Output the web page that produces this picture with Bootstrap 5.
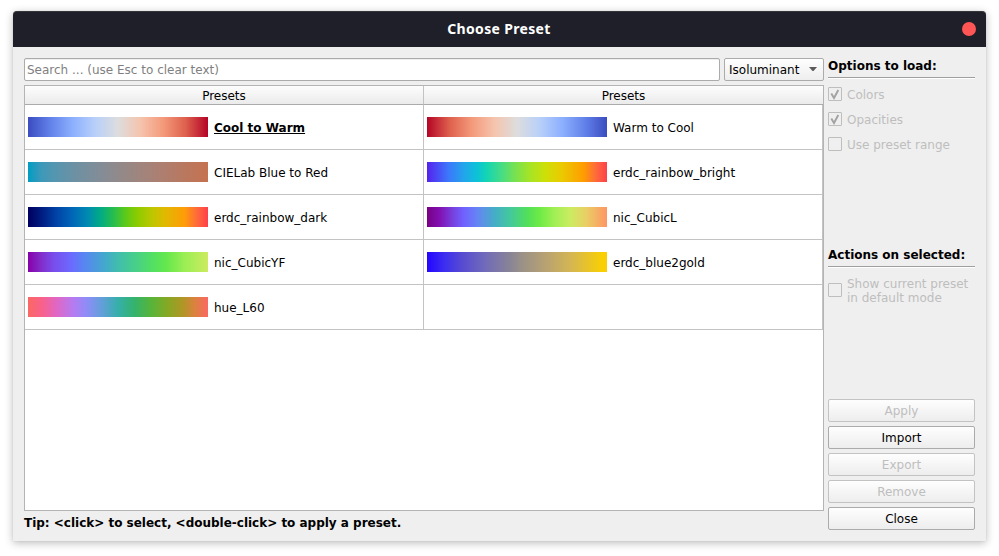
<!DOCTYPE html>
<html lang="en">
<head>
<meta charset="utf-8">
<title>Choose Preset</title>
<link href="https://cdn.jsdelivr.net/npm/bootstrap@5.3.0/dist/css/bootstrap.min.css" rel="stylesheet">
<style>
body{font:12px/14px "DejaVu Sans",sans-serif;color:#000;background:#fff;width:999px;height:556px;overflow:hidden;padding:11px 13px 15px}
.dialog-window{width:973px;height:530px;background:#efefef;border-radius:4px 4px 0 0;box-shadow:0 2px 8px rgba(0,0,0,.27),0 0 1px rgba(0,0,0,.2)}
.title-bar{height:36px;background:#1f1f29;border-top:1px solid #34343b;border-radius:4px 4px 0 0;padding:0 10px}
.title-text{font:700 14px/33px "Noto Sans",sans-serif;letter-spacing:.33px;color:#fff;padding:0 0 2px 13px}
.close-dot{width:14px;height:14px;border-radius:50%;background:#ff5555;margin-bottom:1px}
.main-body{padding:11px;gap:4px}
.left-pane{width:800px}
.right-pane{width:147px}
.search-box.form-control{width:696px;height:23px;min-height:0;font-size:12px;line-height:14px;padding:0 2px;border:1px solid #ababab;border-radius:2px;box-shadow:inset 0 1px #eee}
.search-box::placeholder{color:#7f7f7f}
.kind-box{width:100px;height:23px;border:1px solid #ababab;border-radius:2px;padding:0 6px 0 4px;background:linear-gradient(#fefefe,#eee)}
.preset-table{height:426px;margin-top:4px;border:1px solid #b4b4b4;background:#fff}
.grid-row{display:grid;grid-template-columns:399px 399px}
.head-cell{height:19px;line-height:18px;padding-top:1px;text-align:center;background:linear-gradient(#fdfdfd,#ebebeb);border-bottom:1px solid #ababab;border-right:1px solid #c3c3c3}
.head-cell:last-child{border-right:0}
.preset-cell{height:45px;border-right:1px solid #c3c3c3;border-bottom:1px solid #c3c3c3;padding-left:3px;gap:6px}
.preset-name{padding-top:2px}
.swatch{width:180px;height:20px}
.tip{height:14px;margin-top:5px;letter-spacing:-.01px}
.side-head{font-weight:700;padding:1px 0 4px;border-bottom:1px solid #9f9f9f;box-shadow:0 1px #fff}
.options{padding-top:9px;gap:11px}
.actions{margin-top:96px}
.tick-row{color:#bebebe;gap:5px}
.options .tick-row{height:14px}
.options .tick-row span{padding-top:1px}
.tick-row svg{flex:none}
.default-mode{padding-top:10px}
.default-mode svg{margin-bottom:2px}
.dlg-btn.btn{height:23px;font-size:12px;line-height:20px;padding:1px 0 0;color:#000;border:1px solid #ababab;border-radius:2px;background:linear-gradient(#fefefe,#ededed)}
.dlg-btn.btn:disabled{color:#bebebe;border-color:#c3c3c3;opacity:1}
.g1{background:linear-gradient(90deg,#3b4cc0,#6282ea 12.5%,#8db0fe 25%,#b8d0f9 37.5%,#dddddd 50%,#f5c4ad 62.5%,#f49a7b 75%,#de604d 87.5%,#b40426)}
.g2{background:linear-gradient(270deg,#3b4cc0,#6282ea 12.5%,#8db0fe 25%,#b8d0f9 37.5%,#dddddd 50%,#f5c4ad 62.5%,#f49a7b 75%,#de604d 87.5%,#b40426)}
.g3{background:linear-gradient(90deg,#009dc4,#3b99b9 7%,#5296b1 14%,#6b91a4 25%,#868c95 42%,#978885 55%,#ab8073 72%,#b9785f 87%,#c57251)}
.g4{background:linear-gradient(90deg,#5422ed,#3c78fb 12%,#20a7ea 21%,#0cc3d6 28%,#13d4b4 33%,#44dc88 41%,#78e150 49%,#a5e426 57%,#cfdf08 66%,#ebc900 75%,#ff9d00 87%,#ff693c 94%,#ff4049)}
.g5{background:linear-gradient(90deg,#00005f,#001e83 8%,#0044a7 16%,#0068b7 25%,#008ab2 33%,#00aa85 40%,#24bc52 47%,#5bc91b 54%,#8ecb00 61%,#bec600 69%,#e0b900 76%,#ff9c08 87%,#ff693c 94%,#ff4049)}
.g6{background:linear-gradient(90deg,#780085,#8210b2 7%,#773fdc 14%,#715fff 20%,#6585f4 28%,#43afc5 38%,#43c89d 46%,#52e059 56%,#70eb46 63%,#a2ef54 71%,#cceb61 80%,#e9d065 88%,#ff9564)}
.g7{background:linear-gradient(90deg,#8700a9,#832bc9 7%,#794ceb 14%,#6b6aff 24%,#5688f0 32%,#42aacb 43%,#41bdad 50%,#47ce8c 59%,#52df63 69%,#65e84c 77%,#9bee54 87%,#cceb61)}
.g8{background:linear-gradient(90deg,#fb6863,#f8618c 8%,#df67c5 16%,#b67bf1 25%,#918bf8 32%,#629fda 41%,#36afaa 50%,#34b36d 59%,#55b43b 68%,#83a924 77%,#b09625 86%,#dd8040 93%,#fb6863)}
.g9{background:linear-gradient(90deg,#2305ff,#3d2fef 10%,#584cd0 20%,#716abb 32%,#888495 46%,#9b9287 53%,#b8a271 66%,#d5b653 80%,#fad000 98%,#fccc04)}
</style>
<script src="https://cdn.jsdelivr.net/npm/bootstrap@5.3.0/dist/js/bootstrap.bundle.min.js"></script>
</head>
<body>
<div class="dialog-window d-flex flex-column">
  <header class="title-bar d-flex align-items-center">
    <div class="title-text flex-grow-1 text-center">Choose Preset</div>
    <div class="close-dot"></div>
  </header>
  <main class="main-body d-flex flex-grow-1">
    <section class="left-pane d-flex flex-column">
      <div class="d-flex gap-1">
        <input class="search-box form-control" placeholder="Search ... (use Esc to clear text)">
        <div class="kind-box d-flex align-items-center justify-content-between">Isoluminant
          <svg width="8" height="5"><path d="M0 0h8L4.5 4h-1z" fill="#5b5b5b"/></svg></div>
      </div>
      <div class="preset-table">
        <div class="grid-row"><div class="head-cell">Presets</div><div class="head-cell">Presets</div></div>
        <div class="grid-row">
          <div class="preset-cell d-flex align-items-center"><div class="swatch g1"></div><span class="preset-name fw-bold text-decoration-underline">Cool to Warm</span></div>
          <div class="preset-cell d-flex align-items-center"><div class="swatch g2"></div><span class="preset-name">Warm to Cool</span></div>
          <div class="preset-cell d-flex align-items-center"><div class="swatch g3"></div><span class="preset-name">CIELab Blue to Red</span></div>
          <div class="preset-cell d-flex align-items-center"><div class="swatch g4"></div><span class="preset-name">erdc_rainbow_bright</span></div>
          <div class="preset-cell d-flex align-items-center"><div class="swatch g5"></div><span class="preset-name">erdc_rainbow_dark</span></div>
          <div class="preset-cell d-flex align-items-center"><div class="swatch g6"></div><span class="preset-name">nic_CubicL</span></div>
          <div class="preset-cell d-flex align-items-center"><div class="swatch g7"></div><span class="preset-name">nic_CubicYF</span></div>
          <div class="preset-cell d-flex align-items-center"><div class="swatch g9"></div><span class="preset-name">erdc_blue2gold</span></div>
          <div class="preset-cell d-flex align-items-center"><div class="swatch g8"></div><span class="preset-name">hue_L60</span></div>
          <div class="preset-cell"></div>
        </div>
      </div>
      <div class="tip fw-bold">Tip: &lt;click&gt; to select, &lt;double-click&gt; to apply a preset.</div>
    </section>
    <aside class="right-pane d-flex flex-column">
      <div class="side-head">Options to load:</div>
      <div class="options d-flex flex-column">
        <div class="tick-row d-flex align-items-center"><svg width="14" height="14" fill="none"><rect x=".5" y=".5" width="13" height="13" rx=".5" stroke="#bebebe"/><path d="M3.3 6.5L6 11 10.3 3" stroke="#a2a2a2" stroke-width="1.9"/></svg><span>Colors</span></div>
        <div class="tick-row d-flex align-items-center"><svg width="14" height="14" fill="none"><rect x=".5" y=".5" width="13" height="13" rx=".5" stroke="#bebebe"/><path d="M3.3 6.5L6 11 10.3 3" stroke="#a2a2a2" stroke-width="1.9"/></svg><span>Opacities</span></div>
        <div class="tick-row d-flex align-items-center"><svg width="14" height="14" fill="none"><rect x=".5" y=".5" width="13" height="13" rx=".5" stroke="#bebebe"/></svg><span>Use preset range</span></div>
      </div>
      <div class="side-head actions">Actions on selected:</div>
      <div class="tick-row default-mode d-flex align-items-center"><svg width="14" height="14" fill="none"><rect x=".5" y=".5" width="13" height="13" rx=".5" stroke="#bebebe"/></svg><span class="text-nowrap">Show current preset<br>in default mode</span></div>
      <div class="d-flex flex-column gap-1 mt-auto">
        <button class="btn dlg-btn" disabled>Apply</button>
        <button class="btn dlg-btn">Import</button>
        <button class="btn dlg-btn" disabled>Export</button>
        <button class="btn dlg-btn" disabled>Remove</button>
        <button class="btn dlg-btn">Close</button>
      </div>
    </aside>
  </main>
</div>
</body>
</html>
